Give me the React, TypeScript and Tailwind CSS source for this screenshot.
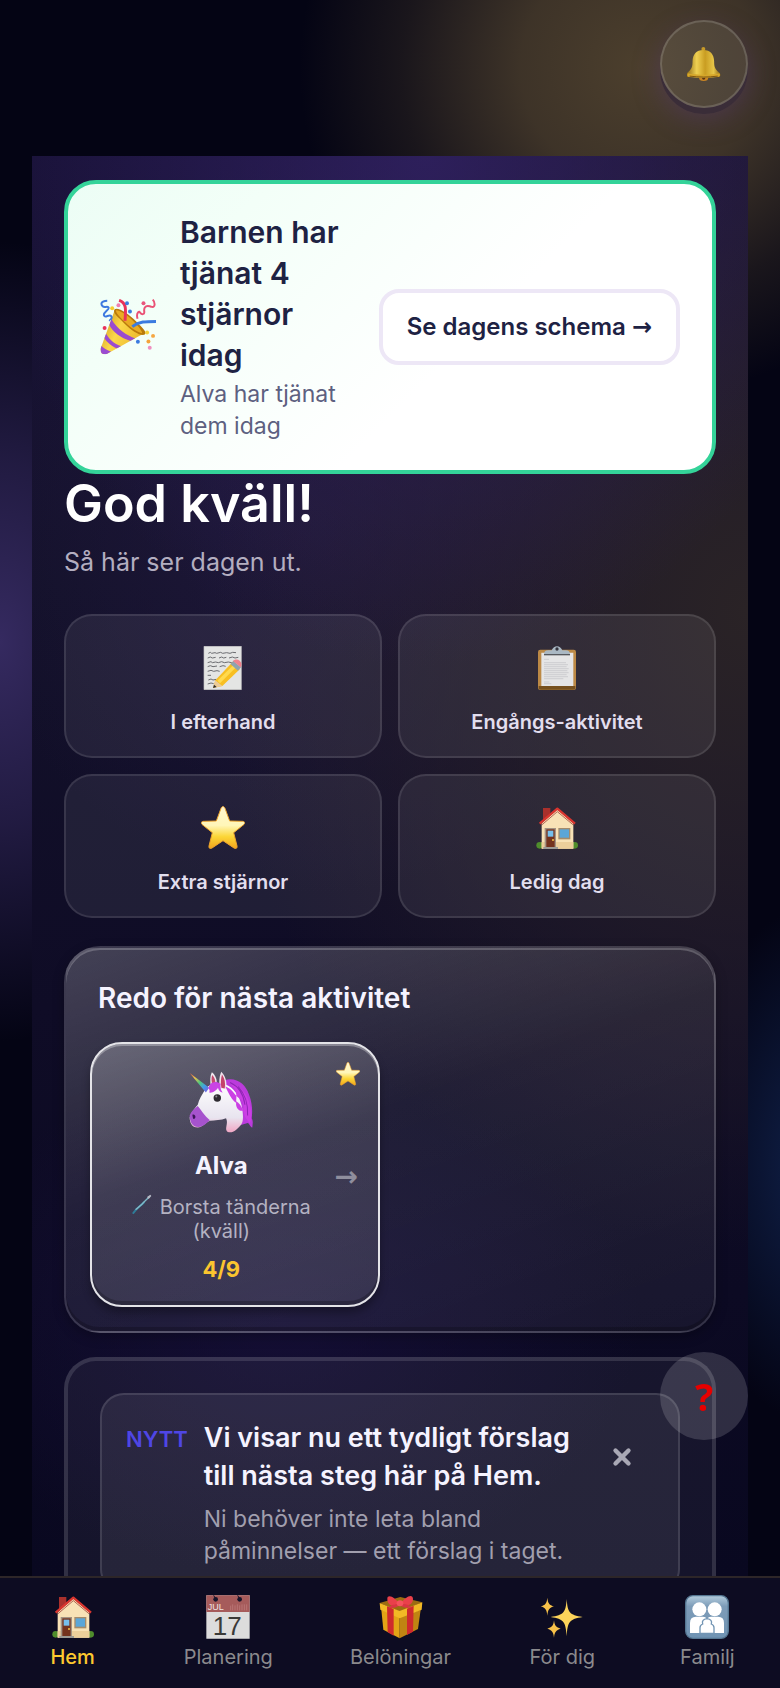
import clsx from "clsx";
import { X } from "lucide-react";
import { ReactElement, ReactNode } from "react";

interface IconProps {
  className?: string;
}

const BellIcon = ({ className }: IconProps) => (
  <svg className={className} viewBox="0 0 104 104" aria-hidden="true">
    <defs>
      <linearGradient id="bell" x1="0" x2="1" y1="0" y2="0">
        <stop offset="0" stopColor="#8f6a14" />
        <stop offset=".3" stopColor="#efd052" />
        <stop offset=".55" stopColor="#c99d22" />
        <stop offset=".8" stopColor="#e6c548" />
        <stop offset="1" stopColor="#8a6312" />
      </linearGradient>
    </defs>
    <circle cx="50" cy="6" r="6" fill="#c79a28" />
    <ellipse cx="51" cy="94" rx="14" ry="10" fill="#c98524" />
    <circle cx="51" cy="95" r="5" fill="#5b3513" />
    <path
      d="M50 9c22 0 32 14 33 34 0 18 2 24 15 35 7 6 5 14-3 14-30 3-60 3-90 0-7 0-9-8-3-14 13-11 15-17 15-35C18 23 28 9 50 9z"
      fill="url(#bell)"
    />
    <path d="M3 80c30 6 66 6 96 0 4 5 2 11-4 11-30 3-60 3-88 0-6 0-8-6-4-11z" fill="#d6a72b" />
    <path d="M8 89c30 4 56 4 86 0" stroke="#7d5410" strokeWidth="3" fill="none" />
  </svg>
);

const PartyIcon = ({ className }: IconProps) => (
  <svg className={className} viewBox="0 0 170 170" aria-hidden="true">
    <defs>
      <linearGradient id="cone" x1="0" x2="1" y1=".2" y2=".7">
        <stop offset="0" stopColor="#c98a12" />
        <stop offset=".4" stopColor="#fbd84a" />
        <stop offset="1" stopColor="#e3a51c" />
      </linearGradient>
      <clipPath id="coneClip">
        <path d="M46 30c30 8 70 40 88 74L22 166c-12 5-22 0-20-16z" />
      </clipPath>
    </defs>
    <g clipPath="url(#coneClip)">
      <path d="M0 0h170v170H0z" fill="url(#cone)" />
      <path d="M34 60c20 34 46 50 74 60l-12 8C60 118 38 98 28 78zM18 104c12 24 32 36 56 42l-14 8C36 146 20 130 12 118zM0 138c10 12 22 18 34 22l-14 10H0z" fill="#9a4bd1" />
    </g>
    <path d="M44 32c8-10 42 12 66 36 20 20 34 34 26 40-12 6-40-12-62-34S38 42 44 32z" fill="#b97a0c" />
    <path d="M48 34c14 0 40 18 60 40 12 12 20 24 20 30-12-2-34-16-50-32S50 46 48 34z" fill="#e9ab23" />
    <path d="M58 4c24 8 20 30 18 62" stroke="#e8325a" strokeWidth="9" fill="none" />
    <path d="M98 84c20-16 42-16 72-16" stroke="#3b7be0" strokeWidth="9" fill="none" />
    <path d="M22 5C2 6 2 16 8 22s14-2 18 4-18 14-14 24 16-6 22 2-6 12-4 14" stroke="#3d79df" strokeWidth="6" fill="none" />
    <path d="M160 2c8 8 8 24-2 22s-16-8-22 2 4 18-6 20-8-12-14-6-4 12-2 20" stroke="#ea5275" strokeWidth="6" fill="none" />
    <circle cx="82" cy="13" r="6" fill="#3b7be0" />
    <circle cx="91" cy="38" r="6" fill="#3b7be0" />
    <circle cx="37" cy="28" r="6" fill="#f6cd2d" />
    <circle cx="56" cy="19" r="6" fill="#ef7fb0" />
    <circle cx="132" cy="13" r="6" fill="#e9567c" />
    <circle cx="14" cy="88" r="6" fill="#e8325a" />
    <circle cx="143" cy="102" r="6" fill="#f7d23b" />
    <circle cx="161" cy="112" r="6" fill="#f5a742" />
    <circle cx="115" cy="130" r="6" fill="#3b7be0" />
    <circle cx="147" cy="129" r="6" fill="#f5a33a" />
    <circle cx="151" cy="148" r="6" fill="#ef8fc0" />
  </svg>
);

const MemoIcon = ({ className }: IconProps) => (
  <svg className={className} viewBox="0 0 132 132" aria-hidden="true">
    <path d="M9 1h112v130H9z" fill="#e4e5e4" />
    <path d="M9 1h112v130H9z" fill="none" stroke="#c6c6c4" strokeWidth="2" />
    <g stroke="#6c6d71" strokeWidth="3" fill="none">
      <path d="M22 22l6-3 4 3 10-2 5 2 12-3 6 3 12-2 10 2 8-3 10 1" />
      <path d="M20 36l8-3 6 3 10-2M54 36l8-3 6 3 8-2M84 36l10-3 8 3 10-2" />
      <path d="M20 50l10-3 4 3 10-2 8 2 10-3 8 3 12-2 10 2 8-3" />
      <path d="M20 62l8-3 8 3 12-2M56 62l10-3 8 2M20 76l10-3 8 3 10-2 8 2" />
      <path d="M20 88h10M22 102l8-3 6 3 10-2M20 114l10-3 8 2" />
    </g>
    <path d="M36 126l7-23L94 49l23 20-53 51z" fill="#f8bf22" />
    <path d="M49 104l51-50 8 7-51 51z" fill="#ffda4f" />
    <path d="M36 126l7-23 21 17z" fill="#eccb98" />
    <path d="M36 126l3-10 8 7z" fill="#2c2b2b" />
    <path d="M88 54l10-8 22 18-9 10z" fill="#8fa3ae" />
    <path d="M96 45c5-6 14-6 20-1s7 13 3 20z" fill="#f0838d" />
  </svg>
);

const ClipboardIcon = ({ className }: IconProps) => (
  <svg className={className} viewBox="0 0 132 132" aria-hidden="true">
    <rect x="9" y="11" width="114" height="121" rx="7" fill="#bc8945" />
    <path d="M11 120h110v6q0 5-6 5H17q-6 0-6-5z" fill="#76501e" />
    <path d="M19 20h96v100H19z" fill="#e5e5e6" />
    <g stroke="#c2c2c5" strokeWidth="2">
      <path d="M27 40h15M27 50h66M27 56h72M27 62h68M27 68h74M27 74h70M27 80h74M27 86h68M27 92h72M27 98h58M27 108h16M27 113h22" />
    </g>
    <path d="M27 26q0-13 12-13h11q6-12 16-12t16 12h11q12 0 12 13z" fill="#aab8c3" />
    <path d="M27 24h78v4H27z" fill="#56585d" />
    <circle cx="66" cy="9" r="5" fill="#34343e" />
  </svg>
);

const StarIcon = ({ className }: IconProps) => (
  <svg className={className} viewBox="0 0 132 132" aria-hidden="true">
    <defs>
      <linearGradient id="star" x1="0" x2="0" y1="0" y2="1">
        <stop offset="0" stopColor="#fff7d0" />
        <stop offset=".45" stopColor="#fff6b8" />
        <stop offset=".72" stopColor="#fcd636" />
        <stop offset="1" stopColor="#f2a51c" />
      </linearGradient>
    </defs>
    <path
      d="M60 7c3-7 9-7 12 0l14 38 39 1c7 1 8 6 3 10L98 80l10 40c1 7-3 9-9 6L66 104l-33 22c-6 3-10 1-9-6l10-40L4 56c-5-4-4-9 3-10l39-1z"
      fill="url(#star)"
      stroke="#eea32c"
      strokeWidth="3"
    />
  </svg>
);

const HouseIcon = ({ className }: IconProps) => (
  <svg className={className} viewBox="0 0 132 132" aria-hidden="true">
    <path d="M24 6h22v28L24 46z" fill="#a9302c" />
    <circle cx="14" cy="118" r="10" fill="#4f8d2c" />
    <circle cx="119" cy="118" r="10" fill="#4f8d2c" />
    <path d="M20 52l47-42 48 42v76H20z" fill="#f8e2b6" />
    <path d="M20 108h95v20H20z" fill="#eccf9b" />
    <path d="M14 53l53-45 53 45" fill="none" stroke="#d9352f" strokeWidth="7" strokeLinejoin="round" />
    <path d="M20 57l47-40 48 40" fill="none" stroke="#8d2220" strokeWidth="2" />
    <path d="M29 66h34v60H29z" fill="#a39383" />
    <path d="M34 70h25v54H34z" fill="#74331e" />
    <path d="M38 74h17v18H38z" fill="#76bfec" />
    <circle cx="54" cy="102" r="3" fill="#f7c64a" />
    <path d="M25 123h44v6H25z" fill="#9c9a94" />
    <path d="M70 66h36v34H70z" fill="#a58c6b" />
    <path d="M74 70h28v25H74z" fill="#5ba6d8" />
  </svg>
);

const UnicornIcon = ({ className }: IconProps) => (
  <svg className={className} viewBox="0 0 190 184" aria-hidden="true">
    <defs>
      <linearGradient id="horn" x1="0" x2="1" y1="0" y2="1">
        <stop offset="0" stopColor="#e35a3c" />
        <stop offset=".25" stopColor="#f2c24c" />
        <stop offset=".5" stopColor="#52c97b" />
        <stop offset=".72" stopColor="#3f9fe8" />
        <stop offset="1" stopColor="#8b4be0" />
      </linearGradient>
      <linearGradient id="head" x1="0" x2="0" y1="0" y2="1">
        <stop offset="0" stopColor="#ffffff" />
        <stop offset=".7" stopColor="#e8e4ef" />
        <stop offset="1" stopColor="#f0a6c4" />
      </linearGradient>
    </defs>
    <path d="M104 28c34-12 64 10 74 42 12 30 10 56 8 70 6 10 2 20 2 28-8-4-8-12-14-14l-20 6-20-70z" fill="#bb3bdc" />
    <path d="M64 40c-2-18 0-28 4-36 10 8 16 20 14 38z" fill="#f0e9f0" />
    <path d="M68 36c-2-12-1-18 1-24 7 7 10 16 9 26z" fill="#c54a6e" />
    <path
      d="M46 58c16-24 42-26 62-18 24 8 42 34 48 62 6 30 6 48-2 58-10 12-26 28-40 20-10-8 4-24-4-40-14 6-34 6-48 8-12 4-22 20-36 20-18 0-24-16-24-30 6-18 16-28 24-38 4-16 12-28 20-42z"
      fill="url(#head)"
    />
    <path d="M26 104c10 12 20 30 36 42-10 8-20 20-34 20C8 166 2 148 2 132c4-12 14-20 24-28z" fill="#a653cd" />
    <path d="M10 130c4-3 9 0 9 6s-5 8-7 5z" fill="#3c1459" />
    <path d="M2 6l58 44-10 14z" fill="url(#horn)" />
    <path d="M92 52c-4-22-2-36 4-50 12 12 18 32 14 52z" fill="#f1e4ed" />
    <path d="M96 50c-3-16-1-28 2-40 8 12 11 26 8 42z" fill="#c4426b" />
    <path d="M58 52c2-16 18-26 36-14-2 14 2 20 6 26-10-2-12-8-14-14-4 8-16 16-26 14 2-6 2-8-2-12z" fill="#c944e4" />
    <path d="M108 46c24 8 24 24 40 34s16 22 12 38c-14 2-22-12-20-24-12-6-22-26-32-48zM140 90c18 12 22 30 26 46l14 20c10-16 6-60-14-90-14-18-30-28-42-26 18 14 18 30 16 50z" fill="#cb3fe4" />
    <path d="M122 34c26 12 40 34 44 66M146 46c20 22 30 50 28 86" fill="none" stroke="#8f26b5" strokeWidth="3" />
    <circle cx="84" cy="80" r="11" fill="#2e2b31" />
    <circle cx="81" cy="76" r="3" fill="#8d8d94" />
  </svg>
);

const ToothbrushIcon = ({ className }: IconProps) => (
  <svg className={className} viewBox="0 0 60 60" aria-hidden="true">
    <path d="M4 57C14 42 26 36 36 25" fill="none" stroke="#2f7d99" strokeWidth="6" strokeLinecap="round" />
    <path d="M12 46c10-8 16-12 24-22L52 8" fill="none" stroke="#82b9c8" strokeWidth="4" strokeLinecap="round" />
    <path d="M45 9l10-7 3 4-8 9z" fill="#b7bbc7" />
  </svg>
);

const CalendarIcon = ({ className }: IconProps) => (
  <svg className={className} viewBox="0 0 132 132" aria-hidden="true">
    <path d="M1 1h130v130H1z" fill="#dcdcdc" />
    <path d="M1 1h130v50H1z" fill="#a65b5b" />
    <circle cx="29" cy="13" r="7" fill="#17152b" />
    <circle cx="101" cy="13" r="7" fill="#17152b" />
    <path d="M29 12l-6-11M101 12l-6-11" stroke="#17152b" strokeWidth="3" />
    <path d="M74 32v14M80 28v18M87 31v15M94 28v18M101 31v15M108 28v18M115 28v18M122 28v18" stroke="#b87474" strokeWidth="3" />
    <text x="5" y="44" fill="#efe3e3" fontSize="27" fontFamily="Liberation Sans, sans-serif">JUL</text>
    <text x="64" y="119" textAnchor="middle" fill="#3a3a38" fontSize="78" fontFamily="Liberation Sans, sans-serif">17</text>
  </svg>
);

const GiftIcon = ({ className }: IconProps) => (
  <svg className={className} viewBox="0 0 132 132" aria-hidden="true">
    <path d="M7 44l55 22v64L13 104z" fill="#e3a416" />
    <path d="M125 44L62 66v64l55-28z" fill="#c08412" />
    <path d="M2 24L64 6l66 16-66 28z" fill="#9c6c12" />
    <path d="M2 24l60 24v22L4 44zM130 22L62 48v22l66-26z" fill="#f2b925" />
    <path d="M24 34l20 8v80l-18-10zM104 32l-20 9v79l18-10z" fill="#cf2a2c" />
    <path d="M62 29C48 4 24-4 25 12c0 14 10 26 36 18zM64 29C80 2 102-4 102 12c0 14-12 24-38 18z" fill="#e9404a" />
    <path d="M60 26C42 28 30 32 28 40c12-2 24 0 34-10 12 10 24 8 36 8-4-8-18-12-32-12z" fill="#d93543" />
    <ellipse cx="63" cy="25" rx="10" ry="9" fill="#f4525c" />
  </svg>
);

const SparklesIcon = ({ className }: IconProps) => (
  <svg className={className} viewBox="0 0 132 132" aria-hidden="true">
    <path d="M80 12c3 40 8 48 48 54-40 6-45 14-48 58-3-44-8-52-48-58 40-6 45-14 48-54z" fill="#fcd45a" />
    <path d="M22 8c2 18 6 22 20 26-14 4-18 10-20 28-2-18-6-24-20-28 14-4 18-8 20-26z" fill="#f8c24a" />
    <path d="M42 76c2 18 6 20 20 25-14 5-18 9-20 27-2-18-6-22-20-27 14-5 18-7 20-25z" fill="#f8c24a" />
  </svg>
);

const FamilyIcon = ({ className }: IconProps) => (
  <svg className={className} viewBox="0 0 132 132" aria-hidden="true">
    <defs>
      <linearGradient id="family" x1="0" x2="0" y1="0" y2="1">
        <stop offset="0" stopColor="#b3cddd" />
        <stop offset=".25" stopColor="#7d9cb8" />
        <stop offset="1" stopColor="#6f93b3" />
      </linearGradient>
    </defs>
    <rect x="2" y="2" width="128" height="128" rx="22" fill="url(#family)" stroke="#547691" strokeWidth="4" />
    <circle cx="43" cy="43" r="21" fill="#fff" />
    <circle cx="89" cy="43" r="21" fill="#fff" />
    <path d="M15 114V84q0-19 18-19h20q13 0 13 13 0-13 13-13h20q18 0 18 19v30z" fill="#fff" />
    <path d="M45 115V98q0-8 8-11-4-14 13-16 17 2 13 16 8 3 8 11v17z" fill="#fff" stroke="#7295b4" strokeWidth="4" />
  </svg>
);

interface TileProps {
  icon: ReactElement;
  label: string;
}

const Tile: React.FC<TileProps> = ({ icon, label }) => (
  <button
    type="button"
    className="flex flex-col items-center gap-[18px] rounded-[28px] border-2 border-white/10 bg-white/7 px-4 pt-[30px] pb-5 text-xl leading-7 font-semibold text-[#e2deee]"
  >
    {icon}
    <span>{label}</span>
  </button>
);

interface NavItemProps {
  icon: ReactElement;
  label: string;
  active?: boolean;
}

const NavItem: React.FC<NavItemProps> = ({ icon, label, active }) => (
  <a
    href="#"
    aria-current={active ? "page" : undefined}
    className={clsx(
      "flex min-w-17 flex-col items-center gap-1 text-xl leading-7",
      active ? "font-medium text-[#fdc92f]" : "text-[#8b8a8d]"
    )}
  >
    {icon}
    <span>{label}</span>
  </a>
);

const tiles: TileProps[] = [
  { icon: <MemoIcon className="size-11" />, label: "I efterhand" },
  { icon: <ClipboardIcon className="size-11" />, label: "Engångs-aktivitet" },
  { icon: <StarIcon className="size-11" />, label: "Extra stjärnor" },
  { icon: <HouseIcon className="size-11" />, label: "Ledig dag" },
];

const navItems: NavItemProps[] = [
  { icon: <HouseIcon className="size-11" />, label: "Hem", active: true },
  { icon: <CalendarIcon className="size-11" />, label: "Planering" },
  { icon: <GiftIcon className="size-11" />, label: "Belöningar" },
  { icon: <SparklesIcon className="size-11" />, label: "För dig" },
  { icon: <FamilyIcon className="size-11" />, label: "Familj" },
];

const StarsBanner = () => (
  <section className="flex items-center gap-6 rounded-[32px] border-4 border-[#34d399] bg-[linear-gradient(135deg,#ecfdf5_0%,#f3fff8_22%,#ffffff_60%)] px-8 py-7">
    <PartyIcon className="size-14 shrink-0" />
    <div className="min-w-0 flex-1">
      <h2 className="text-[30px] leading-[41px] font-semibold text-[#1e2243]">
        Barnen har tjänat 4 stjärnor idag
      </h2>
      <p className="mt-0.5 text-[23px] leading-8 text-[#5d6080]">
        Alva har tjänat dem idag
      </p>
    </div>
    <button
      type="button"
      className="shrink-0 rounded-[20px] border-4 border-[#ede7f6] bg-white px-6 py-4 text-2xl leading-9 font-semibold text-[#1e2243]"
    >
      Se dagens schema{" "}
      <span className="font-['DejaVu_Sans',sans-serif] leading-none font-bold">→</span>
    </button>
  </section>
);

const ChildCard = () => (
  <button
    type="button"
    className="relative flex items-center gap-2 rounded-[32px] border-2 border-[#e4e4e8] bg-[linear-gradient(165deg,rgba(255,255,255,0.25)_0%,rgba(255,255,255,0.13)_45%,rgba(255,255,255,0.1)_100%)] pt-[26px] pr-5 pb-[22px] pl-6 shadow-[0_6px_8px_rgba(0,0,0,0.3),inset_0_2px_0_rgba(255,255,255,0.3),inset_0_-4px_0_rgba(0,0,0,0.22)]"
  >
    <span className="flex min-w-0 flex-1 flex-col items-center">
      <UnicornIcon className="size-16" />
      <span className="mt-4 text-2xl leading-8 font-bold text-[#f5f3ff]">Alva</span>
      <span className="mt-3 text-xl leading-6 text-[#b4b2c2]">
        <ToothbrushIcon className="mr-2 inline size-5 align-baseline" />
        Borsta tänderna (kväll)
      </span>
      <span className="mt-3 text-[22px] leading-7 font-bold text-[#fbc52f]">4/9</span>
    </span>
    <span className="font-['DejaVu_Sans',sans-serif] text-[28px] leading-none font-bold text-[#8f8e9d]">
      →
    </span>
    <StarIcon className="absolute top-[18px] right-[18px] size-6" />
  </button>
);

const NextActivity = () => (
  <section className="mt-7 rounded-[36px] border-2 border-white/12 bg-[linear-gradient(160deg,rgba(255,255,255,0.22)_0%,rgba(255,255,255,0.08)_45%,rgba(255,255,255,0.05)_100%)] px-6 pt-[30px] pb-6 shadow-[0_4px_12px_rgba(0,0,0,0.25),inset_0_2px_0_rgba(255,255,255,0.22),inset_0_-4px_0_rgba(0,0,0,0.2)]">
    <h2 className="px-2 text-[28px] leading-10 font-semibold text-[#f5f3ff]">
      Redo för nästa aktivitet
    </h2>
    <div className="mt-6 grid grid-cols-2 gap-5">
      <ChildCard />
    </div>
  </section>
);

const NewsCard = () => (
  <section className="mt-6 rounded-[32px] border-4 border-white/12 bg-white/5 p-8">
    <div className="flex items-start gap-4 rounded-3xl border-2 border-white/12 bg-white/7 p-6">
      <span className="text-[22px] leading-10 font-semibold text-[#4f46e5]">NYTT</span>
      <div className="min-w-0 flex-1">
        <h2 className="text-[27px] leading-[38px] font-semibold text-[#f5f3ff]">
          Vi visar nu ett tydligt förslag till nästa steg här på Hem.
        </h2>
        <p className="mt-2 text-[23px] leading-8 text-[#a19fae]">
          Ni behöver inte leta bland påminnelser — ett förslag i taget.
        </p>
      </div>
      <button
        type="button"
        aria-label="Stäng"
        className="flex h-19 w-16 shrink-0 items-center justify-center text-[#a9a8b5]"
      >
        <X size={26} strokeWidth={4} />
      </button>
    </div>
  </section>
);

interface RoundButtonProps {
  label: string;
  className?: string;
  children: ReactNode;
}

const RoundButton: React.FC<RoundButtonProps> = ({ label, className, children }) => (
  <button
    type="button"
    aria-label={label}
    className={clsx("flex size-22 items-center justify-center rounded-full", className)}
  >
    {children}
  </button>
);

export default function App() {
  return (
    <div className="flex h-screen flex-col overflow-hidden bg-[#040414] bg-[radial-gradient(340px_330px_at_82%_4%,#4c3f2d_0%,rgba(76,63,45,0.8)_35%,rgba(76,63,45,0.3)_70%,transparent_100%),radial-gradient(240px_400px_at_0%_38%,#352a60_0%,rgba(53,42,96,0.6)_45%,transparent_100%),radial-gradient(140px_260px_at_105%_69%,#10214a_0%,transparent_100%)] font-['Inter',sans-serif]">
      <header className="flex h-39 shrink-0 items-start justify-end px-8 pt-5">
        <RoundButton
          label="Aviseringar"
          className="border-2 border-white/15 bg-white/8 shadow-[0_6px_0_#3a2d38,0_10px_28px_rgba(96,60,150,0.35)]"
        >
          <BellIcon className="size-[34px]" />
        </RoundButton>
      </header>

      <main className="mx-8 min-h-0 flex-1 overflow-hidden bg-[#0d0b24] bg-[radial-gradient(60%_36%_at_55%_0%,rgba(50,34,100,0.8)_0%,transparent_100%),radial-gradient(75%_45%_at_100%_32%,#2a2326_0%,rgba(40,32,40,0.6)_50%,transparent_100%),radial-gradient(50%_26%_at_40%_26%,rgba(36,27,64,0.7)_0%,transparent_100%),radial-gradient(50%_18%_at_35%_82%,rgba(24,16,60,0.7)_0%,transparent_100%),linear-gradient(180deg,#191238_0%,#13112a_30%,#0f0c26_60%,#090820_100%)] px-8 pt-6">
        <StarsBanner />

        <h1 className="text-[52px] leading-15 font-semibold text-white">God kväll!</h1>
        <p className="mt-2.5 text-[25px] leading-9 text-[#b3aec0]">Så här ser dagen ut.</p>

        <div className="mt-[34px] grid grid-cols-2 gap-4">
          {tiles.map((tile) => (
            <Tile key={tile.label} {...tile} />
          ))}
        </div>

        <NextActivity />
        <NewsCard />
      </main>

      <nav className="flex h-28 shrink-0 items-start justify-around border-t-2 border-[#2d2628] bg-[#0d0c22] pt-[17px]">
        {navItems.map((item) => (
          <NavItem key={item.label} {...item} />
        ))}
      </nav>

      <RoundButton
        label="Hjälp"
        className="fixed right-8 bottom-62 bg-white/15 font-['Noto_Sans',sans-serif] text-[38px] font-bold text-[#e60000]"
      >
        ?
      </RoundButton>
    </div>
  );
}
